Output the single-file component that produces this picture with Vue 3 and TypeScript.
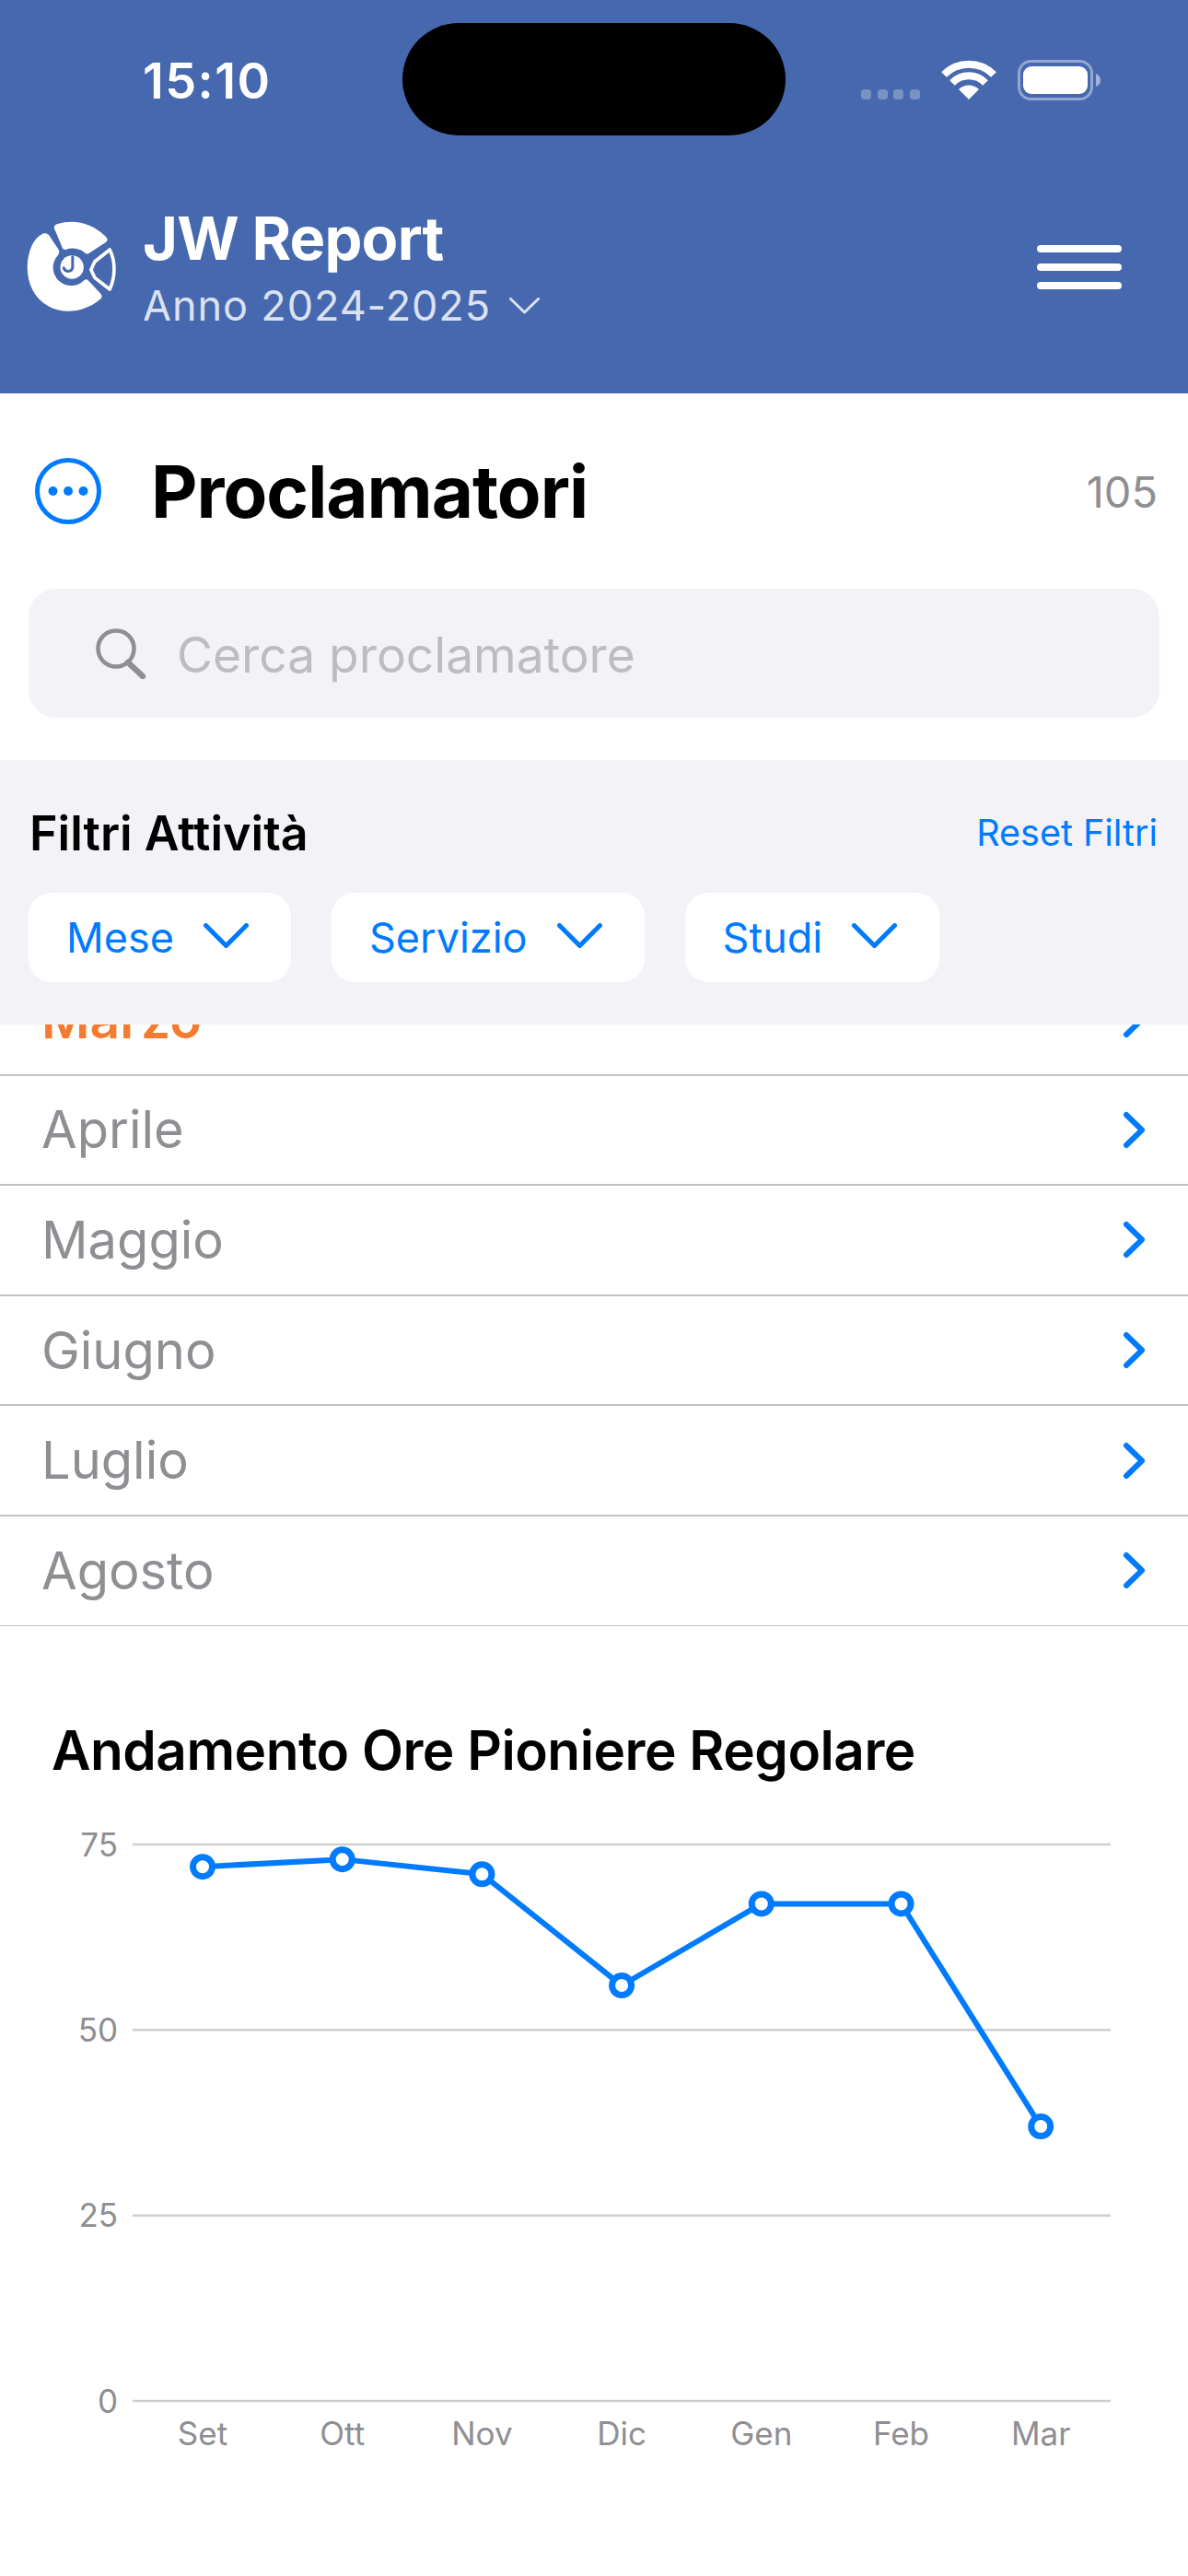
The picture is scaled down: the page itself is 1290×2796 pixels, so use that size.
<template>
  <div class="page">
    <header class="header">
      <div class="island"></div>
      <div class="status">
        <span class="time">15:10</span>
        <svg class="status-icons" width="260" height="44" viewBox="0 0 260 44">
          <g fill="#fff" fill-opacity=".28">
            <rect x="0" y="32" width="11" height="11" rx="3.5" />
            <rect x="18" y="32" width="11" height="11" rx="3.5" />
            <rect x="35" y="32" width="11" height="11" rx="3.5" />
            <rect x="53" y="32" width="11" height="11" rx="3.5" />
          </g>
          <g fill="none" stroke="#fff" stroke-width="8">
            <path d="M90 16 A38 38 0 0 1 144 16" />
            <path d="M99 25 A25 25 0 0 1 135 25" />
          </g>
          <path d="M117 43 L106 32 A15.5 15.5 0 0 1 128 32 Z" fill="#fff" />
          <rect x="171.5" y="1.5" width="79" height="41" rx="13" fill="none" stroke="#fff" stroke-opacity=".42" stroke-width="3" />
          <rect x="176" y="7" width="70" height="30" rx="9" fill="#fff" />
          <path d="M255 15 C259 17 260 19 260 22 C260 25 259 27 255 29 Z" fill="#fff" fill-opacity=".5" />
        </svg>
      </div>
      <div class="appbar">
        <svg class="logo" width="102" height="100" viewBox="80 60 305 300">
          <path fill="#fff" d="M176 92 C168 80 172 72 184 69 C240 52 300 68 341 112 C348 120 346 125 340 129 L285 165 C278 169 274 166 268 160 C250 148 228 146 212 152 C206 154 202 152 199 148 Z" />
          <path fill="#fff" d="M130 104 C142 96 152 100 158 110 L186 152 C190 158 189 162 185 170 A58 58 0 0 0 270 252 C276 248 280 250 284 254 L322 295 C330 303 328 310 320 316 C270 358 200 365 150 335 C90 300 70 220 95 150 C103 128 115 112 130 104 Z" />
          <path fill="none" stroke="#fff" stroke-width="11" stroke-linejoin="round" d="M304 192 L353 153 C372 190 372 240 353 282 L304 244 L292 218 Z" />
          <circle cx="230" cy="210" r="38" fill="#fff" />
          <path fill="none" stroke="#4668ae" stroke-width="9" stroke-linecap="round" d="M232 176 V212 A15 15 0 0 1 203 212" />
        </svg>
        <div class="brand">
          <div class="brand-name">JW Report</div>
          <div class="brand-year">
            <span>Anno 2024-2025</span>
            <svg width="33" height="18" viewBox="0 0 33 18">
              <path d="M1.5 1.5 L16.5 16 L31.5 1.5" fill="none" stroke="#dbe1ee" stroke-width="3" stroke-linecap="round" stroke-linejoin="round" />
            </svg>
          </div>
        </div>
        <div class="burger"><i></i><i></i><i></i></div>
      </div>
    </header>

    <section class="title-row">
      <svg width="72" height="72" viewBox="0 0 72 72">
        <circle cx="36" cy="36" r="33.5" fill="none" stroke="#007aff" stroke-width="5" />
        <circle cx="19.5" cy="36" r="5" fill="#007aff" />
        <circle cx="36" cy="36" r="5" fill="#007aff" />
        <circle cx="52.5" cy="36" r="5" fill="#007aff" />
      </svg>
      <h1>Proclamatori</h1>
      <span class="count">105</span>
    </section>

    <div class="search">
      <svg width="55" height="55" viewBox="0 0 55 55">
        <circle cx="22" cy="22" r="19.5" fill="none" stroke="#8e8e93" stroke-width="4.5" />
        <path d="M35 37 L51 52" fill="none" stroke="#8e8e93" stroke-width="6.5" stroke-linecap="round" />
      </svg>
      <span>Cerca proclamatore</span>
    </div>

    <section class="filters">
      <div class="filters-head">
        <strong>Filtri Attività</strong>
        <span>Reset Filtri</span>
      </div>
      <div class="pills">
        <div v-for="f in filters" :key="f" class="pill">
          <span>{{ f }}</span>
          <svg width="49" height="27" viewBox="0 0 49 27">
            <path d="M2.5 2.5 L24.5 24.5 L46.5 2.5" fill="none" stroke="#007aff" stroke-width="5" stroke-linecap="round" stroke-linejoin="round" />
          </svg>
        </div>
      </div>
    </section>

    <div class="months-view">
      <ul class="months">
        <li v-for="m in months" :key="m.name" class="month" :class="{ current: m.current }">
          <span>{{ m.name }}</span>
          <svg width="26" height="41" viewBox="0 0 26 41">
            <path d="M4 4 L21 20.5 L4 37" fill="none" stroke="#007aff" stroke-width="6" stroke-linecap="round" stroke-linejoin="round" />
          </svg>
        </li>
      </ul>
    </div>

    <section class="chart">
      <h2>Andamento Ore Pioniere Regolare</h2>
      <svg class="plot" width="1290" height="720" viewBox="0 1970 1290 720">
        <g v-for="t in ticks" :key="t">
          <line x1="144" x2="1206" :y1="yOf(t)" :y2="yOf(t)" stroke="#cfcfd2" stroke-width="2.5" />
          <text class="axis" x="128" :y="yOf(t) + 12.5" text-anchor="end">{{ t }}</text>
        </g>
        <polyline :points="line" fill="none" stroke="#007aff" stroke-width="6" stroke-linejoin="round" />
        <g v-for="(p, i) in series" :key="p.label">
          <circle :cx="xOf(i)" :cy="yOf(p.value)" r="10.5" fill="#fff" stroke="#007aff" stroke-width="7" />
          <text class="axis" :x="xOf(i)" y="2654" text-anchor="middle">{{ p.label }}</text>
        </g>
      </svg>
    </section>
  </div>
</template>

<script setup lang="ts">
const filters = ['Mese', 'Servizio', 'Studi']

const months = [
  { name: 'Marzo', current: true },
  { name: 'Aprile' },
  { name: 'Maggio' },
  { name: 'Giugno' },
  { name: 'Luglio' },
  { name: 'Agosto' },
]

const ticks = [75, 50, 25, 0]

const series = [
  { label: 'Set', value: 72 },
  { label: 'Ott', value: 73 },
  { label: 'Nov', value: 71 },
  { label: 'Dic', value: 56 },
  { label: 'Gen', value: 67 },
  { label: 'Feb', value: 67 },
  { label: 'Mar', value: 37 },
]

const xOf = (i: number) => 220 + i * 151.7
const yOf = (v: number) => 2606 - v * 8.053

const line = series.map((p, i) => `${xOf(i)},${yOf(p.value)}`).join(' ')
</script>

<style>
html, body { margin: 0; background: #fff; }
</style>

<style scoped>
.page { width: 1290px; height: 2796px; overflow: hidden; background: #fff; font-family: Inter, "Liberation Sans", sans-serif; color: #000; }

.header { position: relative; height: 427px; background: #4668ae; color: #fff; }
.island { position: absolute; left: 437px; top: 25px; width: 416px; height: 122px; border-radius: 61px; background: #000; }
.status { height: 174px; display: flex; justify-content: space-between; align-items: center; padding: 0 95px 0 155px; }
.time { font-size: 54px; font-weight: 600; letter-spacing: 1.4px; }
.appbar { height: 232px; display: flex; align-items: center; padding: 0 72px 0 28px; }
.logo { flex: none; }
.brand { margin-left: 25px; flex: 1; }
.brand-name { font-size: 65px; font-weight: 700; line-height: 76px; letter-spacing: -.8px; }
.brand-year { display: flex; align-items: center; gap: 20px; margin-top: 8px; font-size: 45px; line-height: 54px; letter-spacing: .9px; color: #dbe1ee; }
.burger { display: flex; flex-direction: column; gap: 12px; width: 92px; }
.burger i { display: block; height: 8px; border-radius: 4px; background: #fff; }

.title-row { height: 212px; display: flex; align-items: center; padding: 0 33px 0 38px; }
.title-row h1 { flex: 1; margin: 0 0 0 54px; font-size: 78px; font-weight: 700; letter-spacing: -1px; }
.count { font-size: 47px; color: #8e8e93; }

.search { height: 140px; margin: 0 31px 46px; padding-left: 73px; border-radius: 30px; background: #f2f2f7; display: flex; align-items: center; gap: 33px; font-size: 53.3px; color: #bcbcc2; }
.search svg { flex: none; }
.search span { margin-top: 2px; }

.filters { height: 287px; box-sizing: border-box; padding: 58px 33px 0 31px; background: #f2f2f7; }
.filters-head { height: 42px; display: flex; justify-content: space-between; align-items: center; padding-left: 1px; }
.filters-head strong { font-size: 52px; font-weight: 600; }
.filters-head span { font-size: 39.5px; color: #007aff; }
.pills { display: flex; gap: 44px; margin-top: 44px; }
.pill { height: 97px; display: flex; align-items: center; gap: 32px; padding: 0 46px 0 41px; border-radius: 25px; background: #fff; font-size: 45px; color: #007aff; }
.pill svg { margin-top: -4px; }

.months-view { height: 653px; overflow: hidden; }
.months { list-style: none; margin: -64px 0 0; padding: 0; }
.month { height: 119.6px; box-sizing: border-box; display: flex; justify-content: space-between; align-items: center; padding: 0 45px; border-bottom: 2px solid #c2c2c4; font-size: 56px; color: #8e8e93; }
.month.current { color: #f47b30; font-weight: 600; font-size: 57px; }

.chart { padding-top: 101px; }
.chart h2 { margin: 0 0 0 56px; font-size: 58.5px; line-height: 68px; font-weight: 600; letter-spacing: -.5px; }
.plot { display: block; margin-top: 36px; }
.axis { font-size: 35px; fill: #8e8e93; }
</style>
